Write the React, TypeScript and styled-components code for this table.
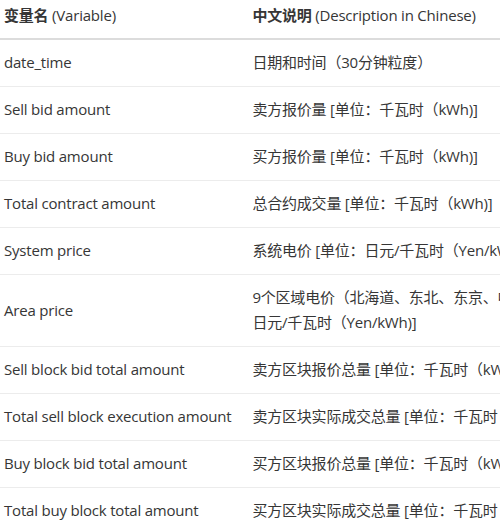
import React from "react";
import styled, { createGlobalStyle } from "styled-components";

const Global = createGlobalStyle`
  html, body {
    margin: 0;
    padding: 0;
    background: #ffffff;
    overflow: hidden;
  }
  body {
    font-family: "Open Sans", "Noto Sans CJK SC", sans-serif;
    color: #363636;
  }
`;

const Viewport = styled.div`
  width: 500px;
  height: 528px;
  overflow: hidden;
`;

const Table = styled.table`
  border-collapse: collapse;
  margin-top: -7px;
  margin-left: -8px;
  font-size: 15px;
  line-height: 25px;
  letter-spacing: -0.2px;
`;

const HeadCell = styled.th<{ $wide?: boolean }>`
  text-align: left;
  font-weight: 500;
  padding: 10px 9px 10px 12px;
  border-bottom: 2px solid #dcdcdc;
  white-space: nowrap;
  width: ${(p) => (p.$wide ? "520px" : "220px")};
`;

const Strong = styled.span`
  font-weight: 700;
`;

const Row = styled.tr`
  border-bottom: 1px solid #ececec;
`;

const Cell = styled.td`
  padding: 10px 9px 11px 12px;
  vertical-align: middle;
  white-space: nowrap;
`;

type Item = { name: string; desc: React.ReactNode };

const items: Item[] = [
  { name: "date_time", desc: "日期和时间（30分钟粒度）" },
  { name: "Sell bid amount", desc: "卖方报价量 [单位：千瓦时（kWh)]" },
  { name: "Buy bid amount", desc: "买方报价量 [单位：千瓦时（kWh)]" },
  { name: "Total contract amount", desc: "总合约成交量 [单位：千瓦时（kWh)]" },
  { name: "System price", desc: "系统电价 [单位：日元/千瓦时（Yen/kWh)]" },
  {
    name: "Area price",
    desc: (
      <>
        9个区域电价（北海道、东北、东京、中部、北陆、关西、中国、四国、九州）[单位：
        <br />
        日元/千瓦时（Yen/kWh)]
      </>
    ),
  },
  { name: "Sell block bid total amount", desc: "卖方区块报价总量 [单位：千瓦时（kWh)]" },
  { name: "Total sell block execution amount", desc: "卖方区块实际成交总量 [单位：千瓦时（kWh)]" },
  { name: "Buy block bid total amount", desc: "买方区块报价总量 [单位：千瓦时（kWh)]" },
  { name: "Total buy block total amount", desc: "买方区块实际成交总量 [单位：千瓦时（kWh)]" },
];

export default function App() {
  return (
    <Viewport>
      <Global />
      <Table>
        <thead>
          <tr>
            <HeadCell>
              <Strong>变量名</Strong> (Variable)
            </HeadCell>
            <HeadCell $wide>
              <Strong>中文说明</Strong> (Description in Chinese)
            </HeadCell>
          </tr>
        </thead>
        <tbody>
          {items.map((it) => (
            <Row key={it.name}>
              <Cell>{it.name}</Cell>
              <Cell>{it.desc}</Cell>
            </Row>
          ))}
        </tbody>
      </Table>
    </Viewport>
  );
}
